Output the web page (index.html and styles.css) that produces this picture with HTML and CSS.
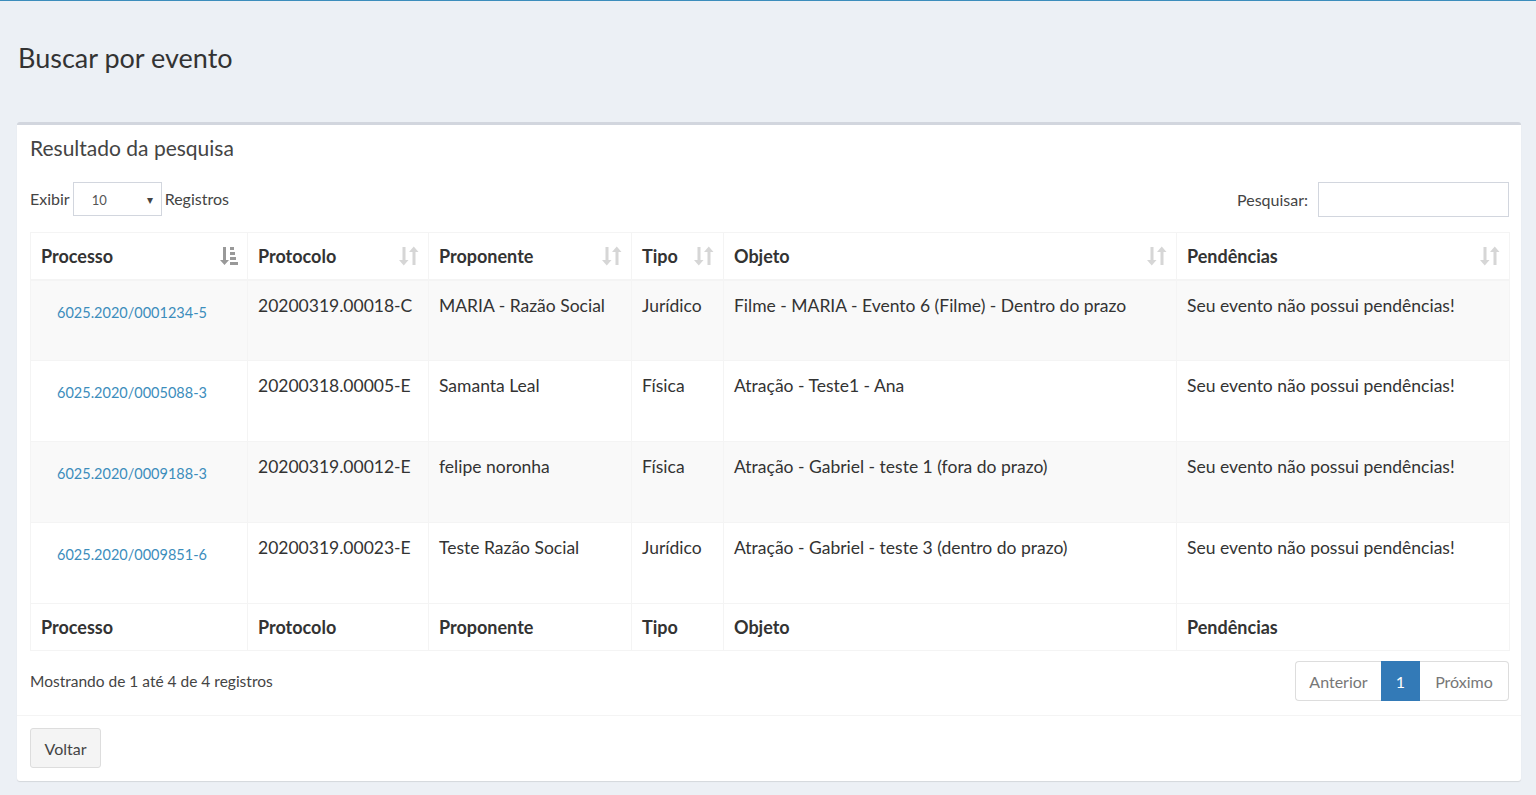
FILE: index.html
```html
<!DOCTYPE html>
<html lang="pt-BR">
<head>
<meta charset="utf-8">
<title>Buscar por evento</title>
<link rel="stylesheet" href="styles.css">
</head>
<body>
<div class="topline"></div>
<section class="content-header">
  <h1 class="page-title">Buscar por evento</h1>
</section>
<section class="content">
  <div class="box">
    <div class="box-header">
      <h3 class="box-title">Resultado da pesquisa</h3>
    </div>
    <div class="box-body">
      <div class="dt-top">
        <label class="dt-length">Exibir
          <span class="select"><span class="select-val">10</span><span class="select-arrow">&#9662;</span></span>
          Registros</label>
        <label class="dt-filter">Pesquisar: <span class="search-input"></span></label>
      </div>
      <table class="dt">
        <colgroup>
          <col class="c1"><col class="c2"><col class="c3"><col class="c4"><col class="c5"><col class="c6">
        </colgroup>
        <thead>
          <tr>
            <th><div class="th-in"><span>Processo</span>
              <svg class="sort sort-active" viewBox="0 0 20 20" width="20" height="20"><path d="M5 1h3v13h3l-4.5 5L2 14h3z"/><rect x="12" y="1" width="4" height="3"/><rect x="12" y="6" width="5" height="3"/><rect x="12" y="11" width="6" height="3"/><rect x="12" y="16" width="8" height="3"/></svg></div></th>
            <th><div class="th-in"><span>Protocolo</span>
              <svg class="sort" viewBox="0 0 20 20" width="20" height="20"><path d="M3.5 1h3v13h3l-4.75 5.5L0 14h3.5z"/><path d="M13.5 19h3V6h3l-4.75-5.5L10 6h3.5z"/></svg></div></th>
            <th><div class="th-in"><span>Proponente</span>
              <svg class="sort" viewBox="0 0 20 20" width="20" height="20"><path d="M3.5 1h3v13h3l-4.75 5.5L0 14h3.5z"/><path d="M13.5 19h3V6h3l-4.75-5.5L10 6h3.5z"/></svg></div></th>
            <th><div class="th-in"><span>Tipo</span>
              <svg class="sort" viewBox="0 0 20 20" width="20" height="20"><path d="M3.5 1h3v13h3l-4.75 5.5L0 14h3.5z"/><path d="M13.5 19h3V6h3l-4.75-5.5L10 6h3.5z"/></svg></div></th>
            <th><div class="th-in"><span>Objeto</span>
              <svg class="sort" viewBox="0 0 20 20" width="20" height="20"><path d="M3.5 1h3v13h3l-4.75 5.5L0 14h3.5z"/><path d="M13.5 19h3V6h3l-4.75-5.5L10 6h3.5z"/></svg></div></th>
            <th><div class="th-in"><span>Pendências</span>
              <svg class="sort" viewBox="0 0 20 20" width="20" height="20"><path d="M3.5 1h3v13h3l-4.75 5.5L0 14h3.5z"/><path d="M13.5 19h3V6h3l-4.75-5.5L10 6h3.5z"/></svg></div></th>
          </tr>
        </thead>
        <tbody>
          <tr class="odd">
            <td><a class="proc-link" href="#">6025.2020/0001234-5</a></td>
            <td>20200319.00018-C</td>
            <td>MARIA - Razão Social</td>
            <td>Jurídico</td>
            <td>Filme - MARIA - Evento 6 (Filme) - Dentro do prazo</td>
            <td>Seu evento não possui pendências!</td>
          </tr>
          <tr>
            <td><a class="proc-link" href="#">6025.2020/0005088-3</a></td>
            <td>20200318.00005-E</td>
            <td>Samanta Leal</td>
            <td>Física</td>
            <td>Atração - Teste1 - Ana</td>
            <td>Seu evento não possui pendências!</td>
          </tr>
          <tr class="odd">
            <td><a class="proc-link" href="#">6025.2020/0009188-3</a></td>
            <td>20200319.00012-E</td>
            <td>felipe noronha</td>
            <td>Física</td>
            <td>Atração - Gabriel - teste 1 (fora do prazo)</td>
            <td>Seu evento não possui pendências!</td>
          </tr>
          <tr>
            <td><a class="proc-link" href="#">6025.2020/0009851-6</a></td>
            <td>20200319.00023-E</td>
            <td>Teste Razão Social</td>
            <td>Jurídico</td>
            <td>Atração - Gabriel - teste 3 (dentro do prazo)</td>
            <td>Seu evento não possui pendências!</td>
          </tr>
        </tbody>
        <tfoot>
          <tr>
            <th>Processo</th>
            <th>Protocolo</th>
            <th>Proponente</th>
            <th>Tipo</th>
            <th>Objeto</th>
            <th>Pendências</th>
          </tr>
        </tfoot>
      </table>
      <div class="dt-bottom">
        <div class="dt-info">Mostrando de 1 até 4 de 4 registros</div>
        <ul class="pagination">
          <li class="pg disabled">Anterior</li>
          <li class="pg active">1</li>
          <li class="pg disabled">Próximo</li>
        </ul>
      </div>
    </div>
    <div class="box-footer">
      <button class="btn">Voltar</button>
    </div>
  </div>
</section>
</body>
</html>
```
FILE: styles.css
```css
* { box-sizing: border-box; }
html, body { margin: 0; padding: 0; }
body {
  background: #ecf0f5;
  font-family: "Lato", "Open Sans", sans-serif;
  color: #333;
  height: 795px;
  overflow: hidden;
}
.topline { height: 1px; background: #3c8dbc; }
.content-header {
  height: 121px;
  padding: 39px 18px 0;
}
.page-title {
  margin: 0;
  font-size: 27px;
  font-weight: 400;
  line-height: 36px;
  color: #333;
}
.content { padding: 0 15px 0 17px; }
.box {
  background: #fff;
  border-top: 3px solid #d2d6de;
  border-radius: 3px;
  box-shadow: 0 1px 1px rgba(0,0,0,0.1);
  height: 659px;
}
.box-header {
  height: 45px;
  padding: 9px 13px 0;
}
.box-title {
  margin: 0;
  font-size: 21px;
  font-weight: 400;
  line-height: 27px;
  color: #444;
}
.box-body { padding: 12px 12px 0 13px; height: 546px; border-bottom: 1px solid #f4f4f4; }
.dt-top {
  display: flex;
  justify-content: space-between;
  align-items: center;
  height: 35px;
  font-size: 16px;
  color: #444;
}
.dt-length { display: flex; align-items: center; gap: 3px; margin-top: -2px; }
.select {
  display: inline-flex;
  align-items: center;
  justify-content: space-between;
  width: 89px;
  height: 34px;
  border: 1px solid #d2d6de;
  padding: 2px 8px 0 18px;
  font-size: 13px;
  color: #555;
}
.select-arrow { font-size: 12px; color: #444; }
.dt-filter { display: flex; align-items: center; gap: 10px; }
.search-input {
  display: inline-block;
  width: 191px;
  height: 35px;
  border: 1px solid #d2d6de;
}
.dt {
  margin-top: 15px;
  width: 1479px;
  border-collapse: collapse;
  border: 1px solid #f4f4f4;
  table-layout: fixed;
  font-size: 17.5px;
}
.c1 { width: 217px; } .c2 { width: 181px; } .c3 { width: 203px; }
.c4 { width: 92px; } .c5 { width: 453px; } .c6 { width: 333px; }
.dt th, .dt td { border: 1px solid #f4f4f4; text-align: left; }
.dt thead th {
  height: 47px;
  padding: 0 9px 0 10px;
  border-bottom: 2px solid #f4f4f4;
  font-weight: 700;
  font-size: 18px;
  color: #333;
}
.th-in { display: flex; align-items: center; justify-content: space-between; }
.sort { fill: #d6d6d6; flex: none; }
.sort-active { fill: #999; }
.dt tbody td {
  height: 81px;
  vertical-align: top;
  padding: 14px 10px 0;
  line-height: 22px;
  color: #333;
}
.dt tbody tr.odd td { background: #f9f9f9; }
.proc-link {
  display: inline-block;
  margin: 7px 0 0 16px;
  font-size: 14.5px;
  color: #3c8dbc;
  text-decoration: none;
}
.dt tfoot th {
  height: 47px;
  padding: 0 10px;
  font-weight: 700;
  font-size: 18px;
  color: #333;
}
.dt-bottom {
  display: flex;
  justify-content: space-between;
  align-items: center;
  margin-top: 10px;
}
.dt-info { font-size: 15.5px; color: #444; }
.pagination {
  display: flex;
  margin: 0;
  padding: 0;
  list-style: none;
  font-size: 16px;
}
.pg {
  height: 40px;
  display: flex;
  align-items: center;
  justify-content: center;
  border: 1px solid #ddd;
  color: #777;
  background: #fff;
}
.pg:first-child { width: 86px; border-radius: 4px 0 0 4px; border-right: none; }
.pg:last-child { width: 89px; border-radius: 0 4px 4px 0; border-left: none; }
.pg.active { width: 39px; background: #337ab7; border-color: #337ab7; color: #fff; }
.box-footer { padding: 12px 13px; }
.btn {
  width: 71px;
  height: 40px;
  background: #f4f4f4;
  border: 1px solid #ddd;
  border-radius: 3px;
  font-family: inherit;
  font-size: 16px;
  color: #444;
}
```
